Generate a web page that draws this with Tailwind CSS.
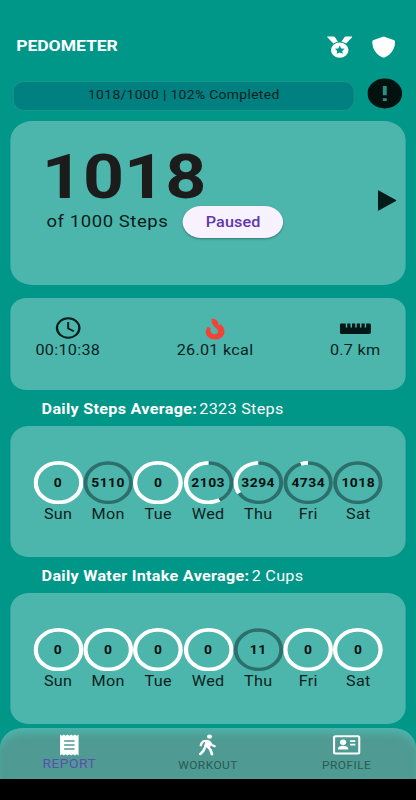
<!DOCTYPE html>
<html lang="en">
<head>
    <meta charset="UTF-8">
    <title>Pedometer</title>
    <script src="https://cdn.jsdelivr.net/npm/@tailwindcss/browser@4"></script>
</head>
<body class="bg-black overflow-hidden">
    <div class="w-[360px] h-[800px] origin-top-left scale-x-[1.15556] flex flex-col bg-[#009688] font-['Roboto',sans-serif] text-sm tracking-[0.25px] text-[#0b1f1e]">
        <header class="h-[78px] shrink-0 pt-[15px] pl-3.5 pr-[18.200px] flex items-center text-white">
            <h1 class="pt-px text-[15.200px] font-bold tracking-[-0.05px] flex-1">PEDOMETER</h1>
            <svg class="w-[22px] h-[22px] mr-[17px]" viewBox="0 0 22 22" fill="currentColor">
                <path d="M.5.5h5.200c.5 0 .8.2 1.100.6l2.700 4.600C7.800 6 6.500 6.700 5.500 7.600L.2 1.200C0 .8.1.5.5.5zM21.500.5h-5.200c-.5 0-.8.2-1.100.6l-2.700 4.600c1.700.3 3 1 4 1.900l5.300-6.400c.2-.4.1-.7-.3-.7z"/>
                <path fill-rule="evenodd" d="M11 6.500a7.600 7.600 0 1 0 0 15.200 7.600 7.600 0 0 0 0-15.200zM11 9.700l1.300 2.700 3 .4-2.150 2.100.5 2.900L11 16.400l-2.650 1.400.5-2.900-2.150-2.100 3-.4z"/>
            </svg>
            <svg class="w-5 h-[22px]" viewBox="0 0 20 22" fill="currentColor">
                <path d="M10 .6c.5 0 .9.2 1.300.4l7.300 3c.9.400 1.300 1 1.300 1.900C19.800 12.300 17 18 11.200 21.200c-.8.4-1.600.4-2.400 0C3 18 .2 12.300.1 5.900c0-.9.4-1.500 1.300-1.900l7.300-3C9.100.8 9.500.6 10 .6z"/>
            </svg>
        </header>

        <div class="h-[43px] shrink-0 pl-[10.800px] pr-[11.800px] flex justify-between items-start">
            <div class="mt-[3px] w-[296.500px] h-[30px] rounded-[10px] border border-[#1a9389] bg-[#008080] flex justify-center text-xs leading-[27px] tracking-[0.3px]">1018/1000 | 102% Completed</div>
            <svg class="w-[30px] h-[31px]" viewBox="0 0 30 31">
                <circle cx="15" cy="15.500" r="15" fill="#03110f"/>
                <path d="M13.300 8h3.400v9.300h-3.400zM13.300 20.200h3.400v2.900h-3.400z" fill="#2c8f84"/>
            </svg>
        </div>

        <section class="mx-[8.7px] h-[163.500px] shrink-0 rounded-[19px] bg-[#4db6ac] flex items-center pl-[31.500px] pr-[8px]">
            <div class="flex-1 self-start pt-[27px]">
                <div class="-ml-1 text-[62px] leading-[58px] font-bold tracking-normal text-[#1c1c1c]">1018</div>
                <div class="flex items-center text-base tracking-[0.5px] text-[#071c1b]">
                    <span class="w-[118.300px]">of 1000 Steps</span>
                    <button class="w-[86.500px] h-8 rounded-full bg-[#f8f1fe] shadow-[0_1px_2px_rgba(0,0,0,0.35)] text-sm font-medium tracking-[0.1px] text-[#6035ad]">Paused</button>
                </div>
            </div>
            <svg class="w-[16.500px] h-[21px] mt-[-5px]" viewBox="0 0 17 21" preserveAspectRatio="none"><path d="M0 0l17 10.500L0 21z" fill="#051b19"/></svg>
        </section>

        <section class="mx-[8.7px] mt-[13.500px] h-[91.500px] shrink-0 rounded-[14px] bg-[#4db6ac] pt-[18px] pl-[22px] pr-[22px] flex justify-between items-start">
            <div class="flex flex-col items-center">
                <svg class="w-6 h-6" viewBox="0 0 24 24" fill="none" stroke="#071c1b" stroke-width="2">
                    <circle cx="12" cy="12" r="9.700"/><path d="M12 6v6.400l5 2.800" stroke-width="1.700"/>
                </svg>
                <span class="leading-5">00:10:38</span>
            </div>
            <div class="flex flex-col items-center">
                <svg class="w-6 h-6" viewBox="0 0 24 24" fill="#f44336">
                    <path d="M9.500 2.200c4 .8 6 3.600 5.700 7.600.7-.3 1.100-.9 1.300-1.700 2.400 1.900 3.800 4.500 3.800 7.300 0 4.600-3.600 8-8.100 8s-8.100-3.300-8.100-7.500c0-2.200.8-4 2.200-5.400.4.8 1.100 1.300 2.100 1.400-.3.8-.4 1.600-.3 2.500.2 2.300 1.700 3.900 3.800 3.900 1.700 0 2.900-1.100 2.900-2.700 0-1.400-.9-2.300-2-3.500-2-2.200-4.600-5.300-3.300-9.900z"/>
                </svg>
                <span class="leading-5">26.01 kcal</span>
            </div>
            <div class="flex flex-col items-center">
                <svg class="w-[27px] h-6" viewBox="0 0 27 24" fill="#051715">
                    <path d="M1.500 7.500h3.700v4h1.300v-4h2.800v4h1.300v-4h2.800v4h1.300v-4h2.800v4h1.300v-4h2.800v4h1.300v-4h2.700c.8 0 1.400.6 1.400 1.400v7.700c0 .8-.6 1.400-1.400 1.400H1.500c-.8 0-1.400-.6-1.400-1.400V8.900c0-.8.600-1.400 1.400-1.400z"/>
                </svg>
                <span class="leading-5">0.7 km</span>
            </div>
        </section>

        <p class="h-[36.500px] shrink-0 pl-9 leading-[39px] text-white whitespace-nowrap"><b class="mr-0.5">Daily Steps Average:</b>2323 Steps</p>
        <section id="steps" class="mx-[8.7px] h-[131px] shrink-0 rounded-[16px] bg-[#4db6ac] pt-[34.500px] pl-[0.3px] flex justify-center"></section>

        <p class="h-9 shrink-0 pl-9 leading-[39px] text-white whitespace-nowrap"><b class="mr-0.5">Daily Water Intake Average:</b>2 Cups</p>
        <section id="water" class="mx-[8.7px] h-[131px] shrink-0 rounded-[16px] bg-[#4db6ac] pt-[34.500px] pl-[0.3px] flex justify-center"></section>

        <nav class="mt-[3.500px] h-[51.500px] shrink-0 rounded-t-[20px] bg-[#4f9a92] shadow-[inset_0_8px_8px_-3px_#4db6ac] grid grid-cols-3 text-[#285c56] text-[10.300px] tracking-[0.4px]">
            <a class="flex flex-col items-center pt-[6.500px] text-xs tracking-[0.4px] text-[#5b4fb0]">
                <svg class="w-[18px] h-[22px]" viewBox="0 0 18 22">
                    <path d="M1 .5l1.600 1.300L4.200.5l1.600 1.300L7.400.5 9 1.800 10.600.5l1.600 1.300L13.800.5l1.600 1.300L17 .5v21l-1.600-1.300-1.600 1.300-1.600-1.300-1.600 1.300L9 20.200l-1.600 1.300-1.600-1.300-1.600 1.300-1.600-1.300L1 21.500z" fill="#fff"/>
                    <path d="M4.500 7h9M4.500 11h9M4.500 15h9" stroke="#4f9a92" stroke-width="1.600"/>
                </svg>
                <span class="leading-[17.500px]">REPORT</span>
            </a>
            <a class="flex flex-col items-center pt-[6.500px]">
                <svg class="w-[18px] h-[22px]" viewBox="0 0 18 22" fill="none" stroke="#fff" stroke-linecap="round" stroke-linejoin="round">
                    <circle cx="10.300" cy="2.600" r="2.200" fill="#fff" stroke="none"/>
                    <path d="M2.700 11.300l1-2.600c.5-1 2.200-1.900 4.200-1.900 1.700 0 2.500.6 3 1.900l1.200 2.200 2.600 1.300" stroke-width="2.100"/>
                    <path d="M7.300 8.300l-1 4.300 3.700 1 1-4.600z" fill="#fff" stroke-width="1.600"/>
                    <path d="M9.500 13.600l1.700 2.300 1.200 4.400M6 14.200l-.9 2.600-2.700 3.200" stroke-width="2.400"/>
                </svg>
                <span class="leading-[19px]">WORKOUT</span>
            </a>
            <a class="flex flex-col items-center pt-[6.500px]">
                <svg class="w-6 h-[22px]" viewBox="0 0 24 22">
                    <rect x="1" y="2.200" width="22" height="17.200" rx="1.500" fill="none" stroke="#fff" stroke-width="2"/>
                    <circle cx="8.900" cy="8.200" r="2.700" fill="#fff"/>
                    <path d="M4.500 15.500v-1c0-1.900 2.500-2.800 4.400-2.800s4.400.9 4.400 2.800v1z" fill="#fff"/>
                    <path d="M14.800 7.200h4.700M14.800 10.700h4.700" stroke="#fff" stroke-width="1.700"/>
                </svg>
                <span class="leading-[19px]">PROFILE</span>
            </a>
        </nav>
        <div class="flex-1 bg-black"></div>
    </div>

    <script>
        var days = ['Sun', 'Mon', 'Tue', 'Wed', 'Thu', 'Fri', 'Sat'];

        function circle(color, width, length, offset) {
            return '<circle cx="21.65" cy="21.65" r="19.7" stroke="' + color + '" stroke-width="' + width + '" pathLength="100" stroke-dasharray="' + length + ' 100" stroke-dashoffset="' + -offset + '" transform="rotate(-90 21.65 21.65)"/>';
        }

        // goals: one per day, the dark arc is value / goal, the rest is white
        function renderWeek(id, values, goals) {
            var html = '';
            for (let i = 0; i < days.length; i++) {
                var pct = Math.min(100, values[i] / goals[i] * 100);
                var rings = '';
                if (pct < 100) rings += circle('#fff', 3.7, 100 - pct, pct);
                if (pct > 0) rings += circle('#2d6f6c', 3.4, pct, 0);
                html += '<div class="w-[43.3px] flex flex-col items-center">' +
                    '<div class="grid place-items-center">' +
                    '<svg class="col-start-1 row-start-1 w-[43.3px] h-[43.3px]" viewBox="0 0 43.3 43.3" fill="none">' + rings + '</svg>' +
                    '<b class="col-start-1 row-start-1 pt-px text-xs tracking-[0.4px] text-[#04100f]">' + values[i] + '</b>' +
                    '</div>' +
                    '<span class="leading-5">' + days[i] + '</span></div>';
            }
            document.getElementById(id).innerHTML = html;
        }

        renderWeek('steps', [0, 5110, 0, 2103, 3294, 4734, 1018], [5000, 5000, 5000, 5000, 5000, 5000, 1000]);
        renderWeek('water', [0, 0, 0, 0, 11, 0, 0], [8, 8, 8, 8, 8, 8, 8]);
    </script>
</body>
</html>
